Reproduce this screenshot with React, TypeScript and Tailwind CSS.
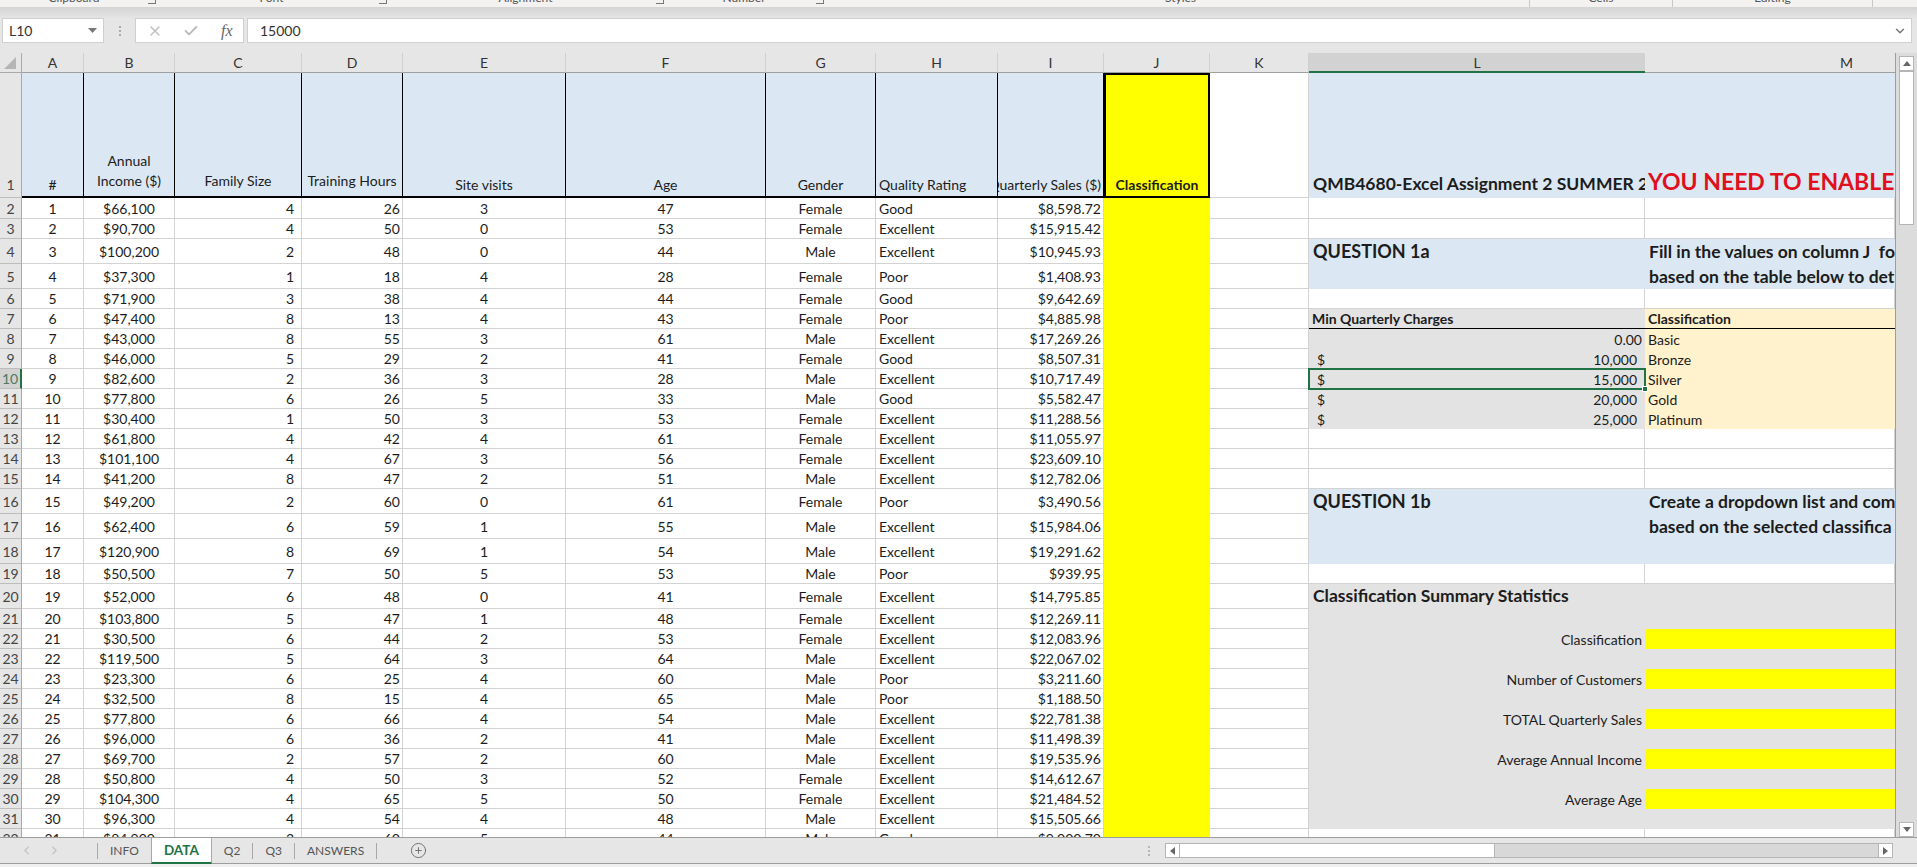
import type { ReactNode } from "react";
import { Check, ChevronDown, ChevronLeft, ChevronRight, CirclePlus, X } from "lucide-react";

const columns = ["A", "B", "C", "D", "E", "F", "G", "H", "I", "J", "K"];

// # | income | family | hours | visits | age | gender | rating | sales
const data: [number, string, number, number, number, number, string, string, string][] = [
  [1, "$66,100", 4, 26, 3, 47, "Female", "Good", "$8,598.72"],
  [2, "$90,700", 4, 50, 0, 53, "Female", "Excellent", "$15,915.42"],
  [3, "$100,200", 2, 48, 0, 44, "Male", "Excellent", "$10,945.93"],
  [4, "$37,300", 1, 18, 4, 28, "Female", "Poor", "$1,408.93"],
  [5, "$71,900", 3, 38, 4, 44, "Female", "Good", "$9,642.69"],
  [6, "$47,400", 8, 13, 4, 43, "Female", "Poor", "$4,885.98"],
  [7, "$43,000", 8, 55, 3, 61, "Male", "Excellent", "$17,269.26"],
  [8, "$46,000", 5, 29, 2, 41, "Female", "Good", "$8,507.31"],
  [9, "$82,600", 2, 36, 3, 28, "Male", "Excellent", "$10,717.49"],
  [10, "$77,800", 6, 26, 5, 33, "Male", "Good", "$5,582.47"],
  [11, "$30,400", 1, 50, 3, 53, "Female", "Excellent", "$11,288.56"],
  [12, "$61,800", 4, 42, 4, 61, "Female", "Excellent", "$11,055.97"],
  [13, "$101,100", 4, 67, 3, 56, "Female", "Excellent", "$23,609.10"],
  [14, "$41,200", 8, 47, 2, 51, "Male", "Excellent", "$12,782.06"],
  [15, "$49,200", 2, 60, 0, 61, "Female", "Poor", "$3,490.56"],
  [16, "$62,400", 6, 59, 1, 55, "Male", "Excellent", "$15,984.06"],
  [17, "$120,900", 8, 69, 1, 54, "Male", "Excellent", "$19,291.62"],
  [18, "$50,500", 7, 50, 5, 53, "Male", "Poor", "$939.95"],
  [19, "$52,000", 6, 48, 0, 41, "Female", "Excellent", "$14,795.85"],
  [20, "$103,800", 5, 47, 1, 48, "Female", "Excellent", "$12,269.11"],
  [21, "$30,500", 6, 44, 2, 53, "Female", "Excellent", "$12,083.96"],
  [22, "$119,500", 5, 64, 3, 64, "Male", "Excellent", "$22,067.02"],
  [23, "$23,300", 6, 25, 4, 60, "Male", "Poor", "$3,211.60"],
  [24, "$32,500", 8, 15, 4, 65, "Male", "Poor", "$1,188.50"],
  [25, "$77,800", 6, 66, 4, 54, "Male", "Excellent", "$22,781.38"],
  [26, "$96,000", 6, 36, 2, 41, "Male", "Excellent", "$11,498.39"],
  [27, "$69,700", 2, 57, 2, 60, "Male", "Excellent", "$19,535.96"],
  [28, "$50,800", 4, 50, 3, 52, "Female", "Excellent", "$14,612.67"],
  [29, "$104,300", 4, 65, 5, 50, "Female", "Excellent", "$21,484.52"],
  [30, "$96,300", 4, 54, 4, 48, "Male", "Excellent", "$15,505.66"],
  [31, "$84,900", 3, 60, 5, 44, "Male", "Good", "$9,000.70"],
];

const grid = "border-b border-r border-[#d3d3d3]";
const cell = `flex items-center overflow-hidden whitespace-nowrap ${grid}`;
const head = "flex items-end overflow-hidden whitespace-nowrap bg-[#dbe8f4] border-r border-b-2 border-black";
const white = `bg-white ${grid}`;
const grey = "flex items-center overflow-hidden whitespace-nowrap bg-[#e4e3e3]";
const yellow = "bg-[#ffff00]";
const blue = "flex flex-col overflow-hidden whitespace-nowrap bg-[#dbe8f4] font-bold leading-[25px] pl-[4px]";

const Money = ({ value, selected }: { value: string; selected?: boolean }) => (
  <div
    className={`flex items-center justify-between whitespace-nowrap bg-[#e4e3e3] pl-[8px] pr-[8px] ${
      selected ? "relative z-10 outline-2 -outline-offset-1 outline-[#217346]" : ""
    }`}
  >
    <span>$</span>
    <span>{value}</span>
    {selected && <span className="absolute -right-[3px] -bottom-[3px] size-[6px] border border-white bg-[#217346]" />}
  </div>
);

const Cream = ({ children }: { children: ReactNode }) => (
  <div className="flex items-center bg-[#fff2cc] pl-[3px]">{children}</div>
);

const StatRow = ({ label }: { label: string }) => (
  <>
    <div className={`${grey} justify-end pr-[3px]`}>{label}</div>
    <div className={yellow} />
  </>
);

const GreyRow = () => (
  <>
    <div className={grey} />
    <div className={grey} />
  </>
);

const WhiteRow = () => (
  <>
    <div className={white} />
    <div className={white} />
  </>
);

// columns L and M, by sheet row; merged cells span rows and leave later rows empty
const rightCells: Record<number, ReactNode> = {
  2: <WhiteRow />,
  3: <WhiteRow />,
  4: (
    <>
      <div className={`${blue} row-span-2 text-[18px]`}>QUESTION 1a</div>
      <div className={`${blue} row-span-2 text-[17.5px]`}>
        <span>Fill in the values on column J&nbsp; for</span>
        <span>based on the table below to det</span>
      </div>
    </>
  ),
  5: null,
  6: <WhiteRow />,
  7: (
    <>
      <div className={`${grey} border-b border-black pl-[3px] font-bold`}>Min Quarterly Charges</div>
      <div className="flex items-center border-b border-black bg-[#fff2cc] pl-[3px] font-bold">Classification</div>
    </>
  ),
  8: (
    <>
      <div className={`${grey} justify-end pr-[3px]`}>0.00</div>
      <Cream>Basic</Cream>
    </>
  ),
  9: (
    <>
      <Money value="10,000" />
      <Cream>Bronze</Cream>
    </>
  ),
  10: (
    <>
      <Money value="15,000" selected />
      <Cream>Silver</Cream>
    </>
  ),
  11: (
    <>
      <Money value="20,000" />
      <Cream>Gold</Cream>
    </>
  ),
  12: (
    <>
      <Money value="25,000" />
      <Cream>Platinum</Cream>
    </>
  ),
  13: <WhiteRow />,
  14: <WhiteRow />,
  15: <WhiteRow />,
  16: (
    <>
      <div className={`${blue} row-span-3 text-[18px]`}>QUESTION 1b</div>
      <div className={`${blue} row-span-3 text-[17.5px]`}>
        <span>Create a dropdown list and com</span>
        <span>based on the selected classifica</span>
      </div>
    </>
  ),
  17: null,
  18: null,
  19: <WhiteRow />,
  20: (
    <>
      <div className={`${grey} pl-[4px] text-[17.5px] font-bold`}>Classification Summary Statistics</div>
      <div className={grey} />
    </>
  ),
  21: <GreyRow />,
  22: <StatRow label="Classification" />,
  23: <GreyRow />,
  24: <StatRow label="Number of Customers" />,
  25: <GreyRow />,
  26: <StatRow label="TOTAL Quarterly Sales" />,
  27: <GreyRow />,
  28: <StatRow label="Average Annual Income" />,
  29: <GreyRow />,
  30: <StatRow label="Average Age" />,
  31: <GreyRow />,
  32: <WhiteRow />,
};

const RibbonGroup = ({ label, launcher, className }: { label: string; launcher?: boolean; className: string }) => (
  <div className={`flex shrink-0 ${className}`}>
    <span className="-mt-[11px] flex-1 text-center text-[12px] text-[#555]">{label}</span>
    {launcher && <span className="mr-[8px] h-[4px] w-[8px] border-r border-b border-[#777]" />}
  </div>
);

const RowHeader = ({ n }: { n: number }) => (
  <div
    className={`flex justify-center border-b border-[#bdbdbd] ${n === 1 ? "items-end pb-[2px]" : "items-center"} ${
      n === 10 ? "border-r-2 border-r-[#217346] bg-[#d2d2d2] text-[#4d7a62]" : "border-r border-r-[#a9a9a9] bg-[#e6e6e6] text-[#444]"
    }`}
  >
    {n}
  </div>
);

const Tab = ({ label }: { label: string }) => (
  <div className="flex h-[16px] items-center border-r border-[#a8a8a8] px-[12px] text-[12px] text-[#555]">{label}</div>
);

export default function App() {
  return (
    <div className="flex h-[867px] w-[1917px] flex-col overflow-hidden bg-[#e6e6e6] font-[Lato,sans-serif] text-[14px] text-[#1c1c1c]">
      {/* ribbon, cut off at the top of the shot */}
      <div className="flex h-[7px] shrink-0 overflow-hidden bg-[#f3f2f1]">
        <RibbonGroup label="Clipboard" launcher className="w-[164px]" />
        <RibbonGroup label="Font" launcher className="w-[231px]" />
        <RibbonGroup label="Alignment" launcher className="w-[277px]" />
        <RibbonGroup label="Number" launcher className="w-[160px]" />
        <RibbonGroup label="Styles" className="w-[698px] border-r border-[#c8c8c8]" />
        <RibbonGroup label="Cells" className="w-[143px] border-r border-[#c8c8c8]" />
        <RibbonGroup label="Editing" className="w-[200px] border-r border-[#c8c8c8]" />
      </div>

      {/* formula bar */}
      <div className="h-[46px] shrink-0 bg-gradient-to-b from-[#d4d4d4] via-[#e6e6e6] via-25% to-[#e6e6e6] pt-[11px] pl-[2px] pr-[5px]">
        <div className="flex h-[25px] items-center">
          <div className="flex h-full w-[102px] items-center justify-between border border-[#cfcfcf] bg-white pl-[6px] pr-[6px] text-[#333]">
            <span>L10</span>
            <svg width="9" height="5" viewBox="0 0 9 5">
              <path d="M0 0h9L4.5 5z" fill="#777" />
            </svg>
          </div>
          <div className="flex w-[31px] flex-col items-center gap-[2px]">
            <span className="size-[2px] bg-[#aaa]" />
            <span className="size-[2px] bg-[#aaa]" />
            <span className="size-[2px] bg-[#aaa]" />
          </div>
          <div className="flex h-full w-[109px] items-center border border-[#cfcfcf] bg-white pl-[11px] text-[#bdbdbd]">
            <X size={16} strokeWidth={2} />
            <Check size={16} strokeWidth={3} className="ml-[20px]" />
            <span className="ml-[22px] font-['Liberation_Serif',serif] text-[16px] text-[#666] italic">fx</span>
          </div>
          <div className="ml-[3px] flex h-full flex-1 items-center justify-between border border-[#cfcfcf] bg-white pl-[12px] pr-[4px] text-[#333]">
            <span>15000</span>
            <ChevronDown size={14} strokeWidth={2.5} className="text-[#777]" />
          </div>
        </div>
      </div>

      {/* sheet */}
      <div className="flex h-[784px] shrink-0 overflow-hidden">
        <div className="grid w-[1895px] shrink-0 grid-cols-[22px_62px_91px_127px_101px_163px_200px_110px_122px_106px_106px_99px_336px_250px] grid-rows-[20px_125px_21px_20px_25px_25px_repeat(10,20px)_repeat(3,25px)_20px_25px_repeat(12,20px)] bg-white">
          {/* column letters */}
          <div className="flex items-end justify-center border-r border-b border-[#a9a9a9] bg-[#e6e6e6] pb-[3px]">
            <svg width="12" height="12" viewBox="0 0 12 12" className="-translate-x-[1px]">
              <path d="M12 0v12H0z" fill="#b5b5b5" />
            </svg>
          </div>
          {columns.map((c) => (
            <div key={c} className="flex items-center justify-center border-r border-b border-r-[#d0d0d0] border-b-[#a0a0a0] bg-[#e6e6e6] text-[#333]">
              {c}
            </div>
          ))}
          <div className="flex items-center justify-center border-b-2 border-[#217346] bg-[#d2d2d2] text-[#333]">L</div>
          <div className="flex items-center border-b border-[#a0a0a0] bg-[#e6e6e6] pl-[195px] text-[#333]">M</div>

          {/* row 1 */}
          <RowHeader n={1} />
          <div className={`${head} justify-center pb-[1px]`}>#</div>
          <div className={`${head} justify-center whitespace-normal pb-[5px] text-center leading-[20px]`}>
            Annual
            <br />
            Income ($)
          </div>
          <div className={`${head} justify-center pb-[5px]`}>Family Size</div>
          <div className={`${head} justify-center pb-[5px]`}>Training Hours</div>
          <div className={`${head} justify-center pb-[1px]`}>Site visits</div>
          <div className={`${head} justify-center pb-[1px]`}>Age</div>
          <div className={`${head} justify-center pb-[1px]`}>Gender</div>
          <div className={`${head} pb-[1px] pl-[3px]`}>Quality Rating</div>
          <div className={`${head} justify-end pb-[1px] pr-[2px]`}>Quarterly Sales ($)</div>
          <div className="flex items-end justify-center overflow-hidden border-2 border-black bg-[#ffff00] pb-[1px] font-bold">Classification</div>
          <div className={white} />
          <div className="flex items-end overflow-hidden whitespace-nowrap bg-[#dbe8f4] pb-[1px] pl-[4px] text-[17.5px] font-bold">
            QMB4680-Excel Assignment 2 SUMMER 2022
          </div>
          <div className="flex items-end overflow-hidden whitespace-nowrap bg-[#dbe8f4] pb-[5px] pl-[3px] text-[23px] leading-[24px] font-bold text-[#e0101c]">
            YOU NEED TO ENABLE
          </div>

          {/* rows 2 to 32 */}
          {data.map((r, i) => {
            const row = i + 2;
            return (
              <div key={row} className="contents">
                <RowHeader n={row} />
                <div className={`${cell} justify-center`}>{r[0]}</div>
                <div className={`${cell} justify-center`}>{r[1]}</div>
                <div className={`${cell} justify-end pr-[7px]`}>{r[2]}</div>
                <div className={`${cell} justify-end pr-[2px]`}>{r[3]}</div>
                <div className={`${cell} justify-center`}>{r[4]}</div>
                <div className={`${cell} justify-center`}>{r[5]}</div>
                <div className={`${cell} justify-center`}>{r[6]}</div>
                <div className={`${cell} pl-[3px]`}>{r[7]}</div>
                <div className={`${cell} justify-end pr-[2px]`}>{r[8]}</div>
                <div className={yellow} />
                <div className={white} />
                {rightCells[row]}
              </div>
            );
          })}
        </div>

        {/* vertical scrollbar */}
        <div className="flex flex-1 flex-col items-center border-l border-[#9d9d9d] bg-[#dcdcdc] pt-[3px]">
          <div className="flex h-[15px] w-[15px] items-center justify-center border border-[#b5b5b5] bg-white">
            <svg width="8" height="5" viewBox="0 0 8 5">
              <path d="M4 0l4 5H0z" fill="#666" />
            </svg>
          </div>
          <div className="h-[154px] w-[15px] border border-[#b5b5b5] bg-white" />
          <div className="flex-1" />
          <div className="flex h-[15px] w-[15px] items-center justify-center border border-[#b5b5b5] bg-white">
            <svg width="8" height="5" viewBox="0 0 8 5">
              <path d="M0 0h8L4 5z" fill="#666" />
            </svg>
          </div>
        </div>
      </div>

      {/* sheet tabs and horizontal scrollbar */}
      <div className="flex h-[27px] shrink-0 items-center border-t border-b border-[#9d9d9d] bg-[#e6e6e6]">
        <div className="flex w-[97px] items-center pl-[20px] text-[#c4c4c4]">
          <ChevronLeft size={13} strokeWidth={2.5} />
          <ChevronRight size={13} strokeWidth={2.5} className="ml-[15px]" />
        </div>
        <div className="h-[16px] border-l border-[#a8a8a8]" />
        <Tab label="INFO" />
        <div className="-ml-px flex h-[26px] w-[61px] items-center justify-center self-start border-x border-b-2 border-x-[#a8a8a8] border-b-[#217346] bg-white text-[13.5px] font-bold text-[#217346]">
          DATA
        </div>
        <Tab label="Q2" />
        <Tab label="Q3" />
        <Tab label="ANSWERS" />
        <CirclePlus size={17} strokeWidth={1.25} className="ml-[33px] text-[#666]" />
        <div className="ml-[721px] flex flex-col gap-[2px]">
          <span className="size-[2px] bg-[#b5b5b5]" />
          <span className="size-[2px] bg-[#b5b5b5]" />
          <span className="size-[2px] bg-[#b5b5b5]" />
        </div>
        <div className="ml-[15px] flex h-[15px] w-[728px] border border-[#b5b5b5] bg-[#d8d8d8]">
          <div className="flex w-[14px] items-center justify-center border-r border-[#b5b5b5] bg-white">
            <svg width="5" height="8" viewBox="0 0 5 8">
              <path d="M5 0v8L0 4z" fill="#666" />
            </svg>
          </div>
          <div className="w-[315px] border-r border-[#b5b5b5] bg-white" />
          <div className="flex-1" />
          <div className="flex w-[14px] items-center justify-center border-l border-[#b5b5b5] bg-white">
            <svg width="5" height="8" viewBox="0 0 5 8">
              <path d="M0 0v8l5-4z" fill="#666" />
            </svg>
          </div>
        </div>
      </div>
      <div className="flex-1 bg-[#f0f0f0]" />
    </div>
  );
}
